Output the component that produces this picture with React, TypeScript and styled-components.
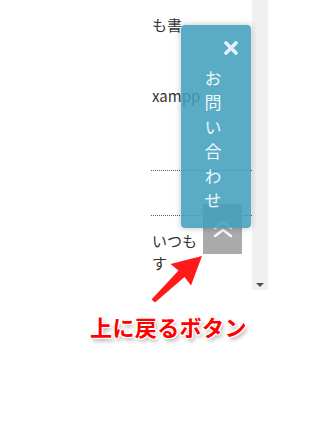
import styled, { createGlobalStyle } from 'styled-components';

const GlobalStyle = createGlobalStyle`
  html, body {
    margin: 0;
    padding: 0;
    background: #ffffff;
  }
  body {
    font-family: "Noto Sans CJK JP", "Noto Sans", sans-serif;
  }
`;

const Canvas = styled.div`
  position: relative;
  width: 268px;
  height: 425px;
  overflow: hidden;
  background: #ffffff;
`;

const Shot = styled.div`
  display: flex;
  height: 290px;
`;

const Gutter = styled.div`
  width: 151px;
  flex-shrink: 0;
`;

const Column = styled.div`
  width: 101px;
  flex-shrink: 0;
  color: #333333;
  font-size: 15px;
`;

interface ILine {
  top: number;
}

const Line = styled.p<ILine>`
  margin: ${({ top }) => top}px 0 0 1px;
  line-height: 22px;
  white-space: nowrap;
`;

interface IRule {
  top: number;
}

const Rule = styled.div<IRule>`
  margin-top: ${({ top }) => top}px;
  border-bottom: 1px dotted #5b4f8f;
  width: 100%;
`;

const Scrollbar = styled.div`
  width: 16px;
  flex-shrink: 0;
  background: #f0f0f0;
  display: flex;
  flex-direction: column;
  justify-content: flex-end;
  align-items: center;
  padding-bottom: 3px;
  box-sizing: border-box;
`;

const ScrollArrow = styled.div`
  width: 0;
  height: 0;
  border-left: 4px solid transparent;
  border-right: 4px solid transparent;
  border-top: 4px solid #505050;
`;

const ContactPanel = styled.div`
  position: absolute;
  left: 181px;
  top: 25px;
  width: 70px;
  height: 203px;
  border-radius: 4px;
  background: rgba(66, 159, 190, 0.87);
  box-shadow: 0 0 6px rgba(0, 0, 0, 0.25);
  display: flex;
  flex-direction: column;
  align-items: center;
  z-index: 2;
`;

const CloseIcon = styled.svg`
  align-self: flex-end;
  margin: 16px 13px 0 0;
`;

const ContactText = styled.div`
  writing-mode: vertical-rl;
  margin: 15px 6px 0 0;
  font-size: 17px;
  letter-spacing: 7.5px;
  color: #eef7fa;
  line-height: 1;
`;

const TopButton = styled.div`
  position: absolute;
  left: 203px;
  top: 204px;
  width: 39px;
  height: 50px;
  background: #aaaaaa;
  display: flex;
  align-items: center;
  justify-content: center;
  z-index: 1;
`;

const ArrowLayer = styled.svg`
  position: absolute;
  left: 0;
  top: 0;
  z-index: 3;
`;

const Caption = styled.div`
  margin: 25px 0 0 90px;
  font-size: 22px;
  font-weight: 700;
  line-height: 22px;
  letter-spacing: 0.4px;
  color: #ff0000;
  white-space: nowrap;
  text-shadow:
    1px 0 0 #fff, -1px 0 0 #fff, 0 1px 0 #fff, 0 -1px 0 #fff,
    1px 1px 0 #fff, -1px -1px 0 #fff, 1px -1px 0 #fff, -1px 1px 0 #fff,
    2px 3px 4px rgba(0, 0, 0, 0.35);
`;

export default function App(): JSX.Element {
  return (
    <Canvas>
      <GlobalStyle />
      <Shot>
        <Gutter />
        <Column>
          <Line top={14}>も書</Line>
          <Line top={49}>xampp</Line>
          <Rule top={63} />
          <Rule top={44} />
          <Line top={14}>いつも</Line>
          <Line top={0}>す</Line>
        </Column>
        <Scrollbar>
          <ScrollArrow />
        </Scrollbar>
      </Shot>

      <ContactPanel>
        <CloseIcon width="14" height="14" viewBox="0 0 14 14">
          <path d="M2 2 L12 12 M12 2 L2 12" stroke="#e4f1f6" strokeWidth="3.6" strokeLinecap="round" />
        </CloseIcon>
        <ContactText>お問い合わせ</ContactText>
      </ContactPanel>

      <TopButton>
        <svg width="20" height="18" viewBox="0 0 20 18">
          <path d="M2 8 L10 2 L18 8 M2 16 L10 10 L18 16" fill="none" stroke="#ffffff" strokeWidth="2.6" strokeLinecap="round" strokeLinejoin="round" opacity="0.9" />
        </svg>
      </TopButton>

      <ArrowLayer width="268" height="425" viewBox="0 0 268 425">
        <polygon points="151.5,299.5 178.5,270.5 170.5,264 202,256 191,285.5 184.5,277 155,302.5" fill="#ff1a1a" />
      </ArrowLayer>

      <Caption>上に戻るボタン</Caption>
    </Canvas>
  );
}
